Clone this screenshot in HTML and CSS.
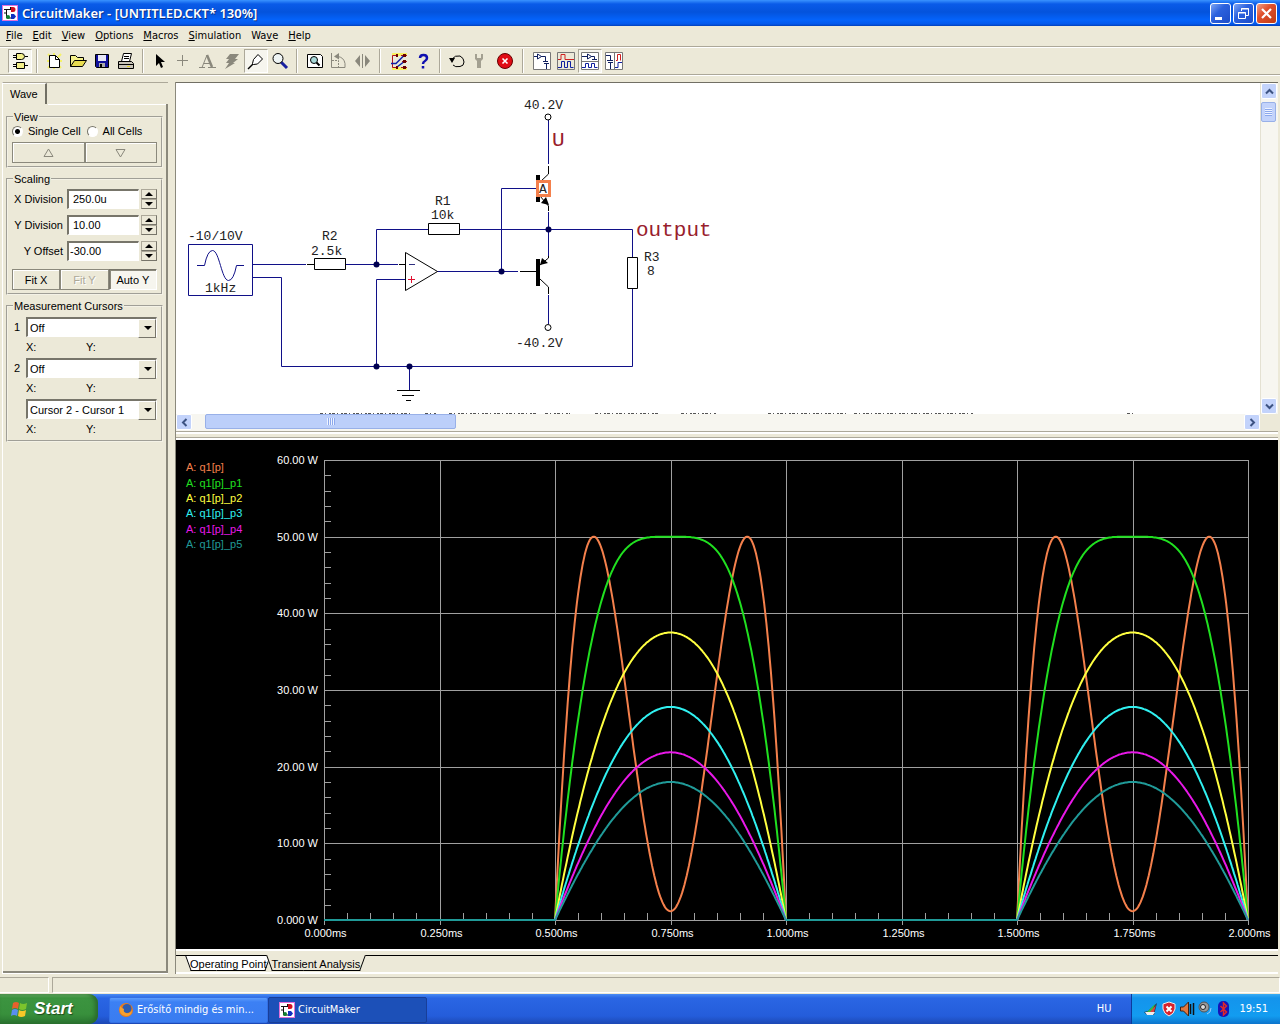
FILE: index.html
```
<!DOCTYPE html>
<html lang="en">
<head>
  <meta charset="UTF-8">
  <title>CircuitMaker - [UNTITLED.CKT* 130%]</title>
  <meta name="viewport" content="width=device-width, initial-scale=1.0">
  <link rel="stylesheet" href="styles.css">
</head>
<body>
  <!-- shared logo -->
  <svg class="defs" width="0" height="0">
    <symbol id="logo" viewBox="0 0 16 16">
      <rect width="16" height="16" fill="#fff" stroke="#e070d8" stroke-width="2"/>
      <path d="M2 4.500h9M4.500 5v8h6M8.500 2v3M2 8h2" fill="none" stroke="#111"/>
      <path d="M9 2h2a2.500 2.500 0 0 1 0 5h-2z" fill="#d01020"/>
      <circle cx="6" cy="12" r="2" fill="#108030"/>
      <path d="M9 9h3l2 2.500-2 2.500h-3z" fill="#1030c0"/>
    </symbol>
  </svg>

  <header class="titlebar">
    <svg class="app-icon" width="16" height="16"><use href="#logo"/></svg>
    <h1>CircuitMaker - [UNTITLED.CKT* 130%]</h1>
    <div class="window-buttons">
      <button class="win-btn" aria-label="Minimize"><svg width="19" height="19"><path d="M4 13h7v3H4z" fill="#fff"/></svg></button>
      <button class="win-btn" aria-label="Restore"><svg width="19" height="19" fill="none" stroke="#fff"><path d="M7.500 7V4.500h7v7H12M7 5h8" /><path d="M4.500 8.500h7v6h-7zM4 9h8"/></svg></button>
      <button class="win-btn close" aria-label="Close"><svg width="19" height="19"><path d="M5 5l9 9M14 5l-9 9" stroke="#fff" stroke-width="2.200"/></svg></button>
    </div>
  </header>

  <nav class="menubar">
    <button><u>F</u>ile</button>
    <button><u>E</u>dit</button>
    <button><u>V</u>iew</button>
    <button><u>O</u>ptions</button>
    <button><u>M</u>acros</button>
    <button><u>S</u>imulation</button>
    <button>Wa<u>v</u>e</button>
    <button><u>H</u>elp</button>
  </nav>

  <div class="toolbar">
    <button class="tool pressed" aria-label="Digital mode"><svg viewBox="0 0 20 20"><path d="M6.500 2.500h5q3 0 3 3t-3 3h-5z M6.500 11.500h8v6h-8z" fill="#f4f08a" stroke="#000"/><path d="M3 4.500h3M3 6.500h3M15 5.500h3M3 13.500h3M3 15.500h3M15 14.500h3" stroke="#000"/></svg></button>
    <span class="sep"></span>
    <button class="tool" aria-label="New"><svg viewBox="0 0 20 20"><path d="M4 3l13 14M17 3L4 17M10 2v16M3 10h15" stroke="#f5f26a" stroke-width="2"/><path d="M5.500 4.500h6l4 4v8h-10z" fill="#fff" stroke="#000"/><path d="M11.500 4.500v4h4" fill="none" stroke="#000"/></svg></button>
    <button class="tool" aria-label="Open"><svg viewBox="0 0 20 20"><path d="M2.500 15.500v-11h5l2 2h6v3" fill="#f4f08a" stroke="#000"/><path d="M2.500 15.500l4-6h12l-4 6z" fill="#e8dc50" stroke="#000"/></svg></button>
    <button class="tool" aria-label="Save"><svg viewBox="0 0 20 20"><path d="M3.500 3.500h13v13h-12l-1-1z" fill="#10109a" stroke="#000"/><path d="M6 4h8v6H6z" fill="#e8e8f8"/><path d="M7 12h6v4H7z" fill="#aaa"/><path d="M8 13h2v3H8z" fill="#000"/></svg></button>
    <button class="tool" aria-label="Print"><svg viewBox="0 0 20 20"><path d="M5.500 10.500l2-8h8l-2 8z" fill="#fff" stroke="#000"/><path d="M8 5.500h5M8 7.500h5" stroke="#000"/><path d="M2.500 10.500h13l2 2v5h-15z" fill="#c8c4b8" stroke="#000"/><path d="M3 13.500h14" stroke="#000"/><path d="M11 15.500h3" stroke="#e0d020"/></svg></button>
    <span class="sep"></span>
    <button class="tool" aria-label="Select"><svg viewBox="0 0 20 20"><path d="M6 3v12l3-3 2 5 2-1-2-5h4z"/></svg></button>
    <button class="tool" aria-label="Wire"><svg viewBox="0 0 20 20"><path d="M8.500 4v11M3 9.500h11" stroke="#8a887c"/></svg></button>
    <button class="tool" aria-label="Text"><svg viewBox="0 0 20 20"><path d="M1 16.500h6M10 16.500h8M4 16.500L9 4M6 12.500h6" stroke="#8a887c" fill="none"/><path d="M9 4l5 12" stroke="#8a887c" stroke-width="2.500"/></svg></button>
    <button class="tool" aria-label="Delete"><svg viewBox="0 0 20 20"><path d="M8 3h9l-4 5h3l-5 4h2L3 18l4-6H4l3-4H4z" fill="#8a887c"/></svg></button>
    <button class="tool pressed" aria-label="Probe"><svg viewBox="0 0 20 20"><path d="M2 18l5-5" stroke="#000" stroke-width="1.500"/><path d="M6.500 12.500l1-4L12 3.500l4.500 4.500-5 5-4 .5z" fill="#fff" stroke="#000"/></svg></button>
    <button class="tool" aria-label="Zoom"><svg viewBox="0 0 20 20"><path d="M11 11l6 6" stroke="#1820a0" stroke-width="3"/><circle cx="8" cy="7.500" r="5" fill="#eef4f4" stroke="#000"/></svg></button>
    <span class="sep"></span>
    <button class="tool" aria-label="Fit page"><svg viewBox="0 0 20 20"><path d="M3.500 3.500h13l2 2v11h-15z" fill="#fff" stroke="#000"/><circle cx="10" cy="9" r="3.500" fill="#a8d8d8" stroke="#000"/><path d="M12.500 11.500l3 3" stroke="#000" stroke-width="2"/></svg></button>
    <button class="tool" aria-label="Rotate"><svg viewBox="0 0 20 20"><path d="M3.500 2v14.500H17v-4q-1-6-7-7" fill="none" stroke="#8a887c"/><path d="M11 2L6 5.500l5 3z" fill="#8a887c"/><path d="M4 9.500h6.500v7" fill="none" stroke="#8a887c" stroke-dasharray="2 1"/></svg></button>
    <button class="tool" aria-label="Mirror"><svg viewBox="0 0 20 20"><path d="M8 4v12L3 10zM13 4v12l5-6z" fill="#8a887c"/><path d="M10.500 3v14" stroke="#8a887c"/></svg></button>
    <span class="sep wide"></span>
    <button class="tool" aria-label="Run analysis"><svg viewBox="0 0 20 20"><path d="M3 2h15v3H3zM3 16h15v3H3z" fill="#f8f060"/><path d="M8 4.500H3.500v12H8M12 4.500h6M13 10.500h5M12 16.500h6" stroke="#b01020" fill="none"/><path d="M2 12.500h5l8-8M8 16l8-6" stroke="#1020a8" stroke-width="1.500" fill="none"/><path d="M7 3h2v3H7zM14 3h3v3h-3zM14 9h3v3h-3zM7 15h2v3H7zM14 15h3v3h-3z" fill="#600"/></svg></button>
    <button class="tool" aria-label="Help"><svg viewBox="0 0 20 20"><path d="M7 7q0-3 3.500-3t3.500 3q0 2-2 3t-2 3M10 15v2.500" stroke="#1010b0" stroke-width="2.500" fill="none"/></svg></button>
    <span class="sep"></span>
    <button class="tool" aria-label="Reset"><svg viewBox="0 0 20 20"><path d="M5 8q3-4 8-3 4 2 4 6t-4 4.500q-5 1-7-1.500" fill="none" stroke="#000"/><path d="M2 7l6 0-3 5z"/></svg></button>
    <button class="tool" aria-label="Step"><svg viewBox="0 0 20 20"><path d="M4 3v5l2 2v7h4v-7l2-2V3l-2 0v4H6V3z" fill="#a3a091"/></svg></button>
    <button class="tool" aria-label="Stop"><svg viewBox="0 0 20 20"><circle cx="10" cy="10" r="7.500" fill="#e00c14" stroke="#600"/><path d="M7.500 7.500l5 5M12.500 7.500l-5 5" stroke="#fff" stroke-width="1.600"/></svg></button>
    <span class="sep wide"></span>
    <button class="tool" aria-label="Schematic view"><svg viewBox="0 0 20 20"><path d="M1.500 1.500h17v17h-17z" fill="#fff" stroke="#777"/><path d="M2 5.500h3M5.500 3v5l4-2.500zM9 5.500h4.500v5M11 10.500h5M12 12.500h5M14.500 13v5" fill="none" stroke="#102060"/></svg></button>
    <button class="tool" aria-label="Waveform view"><svg viewBox="0 0 20 20"><path d="M1.500 1.500h17v17h-17z" fill="#ece9d8" stroke="#777"/><path d="M2 8.500h3v-5h4v5h9" fill="none" stroke="#d02020"/><path d="M2 16.500h3.500v-6h3v6h3v-6h3v6h3" fill="none" stroke="#1020a0"/></svg></button>
    <button class="tool pressed" aria-label="Split horizontal"><svg viewBox="0 0 20 20"><path d="M1.500 1.500h17v17h-17zM2 10.500h16" fill="#fff" stroke="#777"/><path d="M2 5.500h5M7.500 3v5l4-2.500zM11 5.500h3.500v3M12 8.500h5" fill="none" stroke="#102060"/><path d="M2 16.500h3.500v-4h3v4h3v-4h3v4h3" fill="none" stroke="#1020a0"/></svg></button>
    <button class="tool" aria-label="Split vertical"><svg viewBox="0 0 20 20"><path d="M1.500 1.500h17v17h-17zM10.500 2v16" fill="#fff" stroke="#777"/><path d="M2 4.500h4.500v5M3 9.500h6M4 11.500h5M6.500 12v6" fill="none" stroke="#102060"/><path d="M12 9.500h1.500v-6h3v6" fill="none" stroke="#d02020"/><path d="M11 16.500h3v-5h4" fill="none" stroke="#1020a0"/></svg></button>
  </div>

  <main class="workspace">
    <aside class="sidebar">
      <button class="side-tab">Wave</button>
      <div class="side-panel">
        <fieldset>
          <legend>View</legend>
          <div class="radio-row">
            <label><input type="radio" name="cells" checked>Single Cell</label>
            <label><input type="radio" name="cells">All Cells</label>
          </div>
          <div class="button-row">
            <button class="btn" aria-label="Previous"><svg width="11" height="10"><path d="M5.500 1L10 8.500H1z" fill="none" stroke="#8a887c"/></svg></button>
            <button class="btn" aria-label="Next"><svg width="11" height="10"><path d="M5.500 9L10 1.500H1z" fill="none" stroke="#8a887c"/></svg></button>
          </div>
        </fieldset>

        <fieldset>
          <legend>Scaling</legend>
          <div class="scale-row">
            <label for="xdiv">X Division</label>
            <input type="text" id="xdiv" value="250.0u">
            <div class="spin"><button aria-label="Up"></button><button aria-label="Down"></button></div>
          </div>
          <div class="scale-row">
            <label for="ydiv">Y Division</label>
            <input type="text" id="ydiv" value="10.00">
            <div class="spin"><button aria-label="Up"></button><button aria-label="Down"></button></div>
          </div>
          <div class="scale-row">
            <label for="yoff">Y Offset</label>
            <input type="text" id="yoff" class="offset" value="-30.00">
            <div class="spin"><button aria-label="Up"></button><button aria-label="Down"></button></div>
          </div>
          <div class="button-row fit">
            <button class="btn">Fit X</button>
            <button class="btn" disabled>Fit Y</button>
            <button class="btn down">Auto Y</button>
          </div>
        </fieldset>

        <fieldset class="cursors">
          <legend>Measurement Cursors</legend>
          <div class="cursor-row">
            <label for="cur1">1</label>
            <span class="combo"><select id="cur1"><option>Off</option></select></span>
          </div>
          <div class="xy"><span>X:</span><span>Y:</span></div>
          <div class="cursor-row">
            <label for="cur2">2</label>
            <span class="combo"><select id="cur2"><option>Off</option></select></span>
          </div>
          <div class="xy"><span>X:</span><span>Y:</span></div>
          <div class="cursor-row">
            <label for="cur3"></label>
            <span class="combo"><select id="cur3" aria-label="Difference"><option>Cursor 2 - Cursor 1</option></select></span>
          </div>
          <div class="xy"><span>X:</span><span>Y:</span></div>
        </fieldset>
      </div>
    </aside>

    <section class="content">
      <div class="schematic">
        <div class="canvas">
          <svg width="1000" height="331" viewBox="176 83 1000 331">
            <!-- wires -->
            <g class="wire">
              <path d="M252.500 264.500H306M252.500 277.500H281.500V366.500H632.500V289M345 264.500H398M376.500 264.500V229.500H428M460 229.500H632.500V257M376.500 366.500V279.500H405M437 271.500H518M501.500 271.500V188.500H537M548.500 120V164M548.500 212V256M548.500 295V324M409.500 366.500V390"/>
              <path d="M188.500 244.500h64v51h-64z"/>
              <path d="M197 265.500h7.500q3-15 8-15c7 0 9 30 16 30q5 0 8-15h7.500"/>
            </g>
            <!-- parts -->
            <g class="part">
              <path d="M307 264.500H314M399 264.500H405M520 271.500H537M548.500 166V174L540 182M540 196L548.500 206V211M548.500 256V258L540 265M540 279L548.500 287V294"/>
              <path d="M314.500 258.500h31v11h-31zM428.500 223.500h31v11h-31zM627.500 257.500h10v31h-10z" fill="#fff"/>
              <path d="M405.500 252.500v38l32-19z" fill="#fff"/>
              <path d="M397 390.500h23M402 395.500h12M406 400.500h5"/>
              <circle cx="548" cy="117" r="3" fill="#fff"/>
              <circle cx="548" cy="327.500" r="3" fill="#fff"/>
            </g>
            <path d="M536 175h4v27h-4zM536 259h4v27h-4z"/>
            <path d="M549 205l-8-2 5-6zM540 265l2-7 6 5z"/>
            <g class="node">
              <circle cx="376.500" cy="264.500" r="3"/><circle cx="376.500" cy="366.500" r="3"/><circle cx="409.500" cy="366.500" r="3"/>
              <circle cx="501.500" cy="271.500" r="3"/><circle cx="548.500" cy="229.500" r="3"/>
            </g>
            <path d="M409 264.500h6" stroke="#303080"/>
            <path d="M408 279.500h7M411.500 276v7" stroke="#e01030"/>
            <rect x="537.500" y="181.500" width="12" height="14" fill="#fff" stroke="#f4804c" stroke-width="3"/>
            <g class="sch-text">
              <text x="524" y="109">40.2V</text>
              <text x="516" y="347">-40.2V</text>
              <text x="188" y="240">-10/10V</text>
              <text x="205" y="292">1kHz</text>
              <text x="322" y="240">R2</text>
              <text x="311" y="255">2.5k</text>
              <text x="435" y="205">R1</text>
              <text x="431" y="219">10k</text>
              <text x="644" y="261">R3</text>
              <text x="647" y="275">8</text>
              <text x="539" y="193">A</text>
            </g>
            <g class="net">
              <text x="552" y="146">U</text>
              <text x="636" y="236">output</text>
            </g>
            <!-- line of text scrolled below the edge -->
            <path d="M320 413.500H410M425 413.500H436M449 413.500H536M545 413.500H570M595 413.500H658M681 413.500H716M768 413.500H846M854 413.500H974M1127 413.500H1135" class="cutoff"/>
          </svg>
        </div>
        <div class="vscroll">
          <button class="sb" aria-label="Scroll up"><svg width="9" height="9"><path d="M1 6.500l3.500-3.500L8 6.500" /></svg></button>
          <span class="thumb"></span>
          <button class="sb" aria-label="Scroll down"><svg width="9" height="9"><path d="M1 2.500l3.500 3.500L8 2.500"/></svg></button>
        </div>
        <div class="hscroll">
          <button class="sb" aria-label="Scroll left"><svg width="9" height="9"><path d="M6.500 1L3 4.500 6.500 8"/></svg></button>
          <span class="thumb"></span>
          <button class="sb" aria-label="Scroll right"><svg width="9" height="9"><path d="M2.500 1L6 4.500 2.500 8"/></svg></button>
        </div>
      </div>
      <div class="splitter"></div>
      <div class="graph">
        <svg id="plot" viewBox="0 0 1102 509"></svg>
      </div>
      <div class="sheet-tabs">
        <button class="sheet">Operating Point</button>
        <button class="sheet active">Transient Analysis</button>
      </div>
    </section>
  </main>

  <div class="statusbar"><span class="cell"></span><span class="cell fill"></span></div>

  <footer class="taskbar">
    <button class="start">
      <svg width="20" height="18"><path d="M3 3q3-2 6 0l-1 6q-3-2-6 0z" fill="#e8602c"/><path d="M10 3q3 2 7 0l-1 6q-4 2-7 0z" fill="#7cc42c"/><path d="M2 10q3-2 6 0l-1 6q-3-2-6 0z" fill="#5a8ef0"/><path d="M9 10q3 2 7 0l-1 6q-4 2-7 0z" fill="#f8c828"/></svg>
      Start
    </button>
    <button class="task">
      <svg width="16" height="16"><circle cx="8" cy="8" r="7" fill="#e87a1c"/><circle cx="9" cy="6.500" r="4.500" fill="#2c5cb0"/><path d="M2 4q-2 9 6 10 6 0 6-6-2 4-6 3-3-1-2-4l-2-1z" fill="#f6a030"/></svg>
      Erősítő mindig és min...
    </button>
    <button class="task current">
      <svg width="16" height="16"><use href="#logo"/></svg>
      CircuitMaker
    </button>
    <span class="lang">HU</span>
    <div class="tray">
      <svg width="16" height="16"><path d="M1 11l4-1 9-8-2 8-1 4H4z" fill="#183c50"/><path d="M4 11l8-8-3 8z" fill="#30c040"/><path d="M7 11l6-7-2 7z" fill="#e04040"/><path d="M2 11h10l-2 3H4z" fill="#eee"/></svg>
      <svg width="16" height="16"><path d="M8 1l6 2v5q-1 5-6 7-5-2-6-7V3z" fill="#d8222c" stroke="#eee"/><path d="M5.500 5.500l5 5M10.500 5.500l-5 5" stroke="#fff" stroke-width="2"/></svg>
      <svg width="16" height="16"><path d="M1.500 6h3l5-5v14l-5-5h-3z" fill="#e07840" stroke="#402010"/><path d="M11.500 3v10M14.500 2v12" stroke="#111" stroke-width="1.500"/></svg>
      <svg width="16" height="16"><circle cx="7" cy="6" r="5" fill="#999" stroke="#555"/><circle cx="6" cy="6" r="2.500" fill="#ddd" stroke="#222"/><path d="M10 13q4-1 4-6" fill="none" stroke="#9cf"/></svg>
      <svg width="16" height="16"><rect x="3" y="0" width="11" height="16" rx="5" fill="#1414b8"/><path d="M5.500 5l6 6-3 3V2l3 3-6 6" fill="none" stroke="#e02828" stroke-width="1.500"/></svg>
      <time>19:51</time>
    </div>
  </footer>

  <script src="plot.js"></script>
</body>
</html>
```
FILE: styles.css
```
* {
  box-sizing: border-box;
}
body {
  margin: 0;
  min-height: 100vh;
  display: flex;
  flex-direction: column;
  background: #ece9d8;
  color: #000;
  font-family: "Liberation Sans", Arial, sans-serif;
  font-size: 11px;
  line-height: 14px;
}
button,
input,
select {
  font: inherit;
  color: inherit;
  margin: 0;
}
svg {
  display: block;
  flex: none;
}
.defs {
  position: absolute;
}

/* title bar */
.titlebar {
  display: flex;
  align-items: center;
  gap: 4px;
  height: 26px;
  padding: 0 3px 0 2px;
  background: linear-gradient(#3a93ff, #0a5be8 4px, #0453dc 12px, #0463fb 20px, #0459ec 24px, #0340b8);
}
.titlebar h1 {
  margin: 0;
  flex: 1;
  color: #fff;
  font-family: "Noto Sans", sans-serif;
  font-size: 13px;
  font-weight: 600;
  text-shadow: 1px 1px #0a2f86;
}
.window-buttons {
  display: flex;
  gap: 2px;
}
.win-btn {
  width: 21px;
  height: 21px;
  padding: 0;
  border: 1px solid #fff;
  border-radius: 3px;
  background: linear-gradient(135deg, #7ea6f4, #2c62de 40%, #1c4cc8);
}
.win-btn.close {
  background: linear-gradient(135deg, #f0a088, #e0502c 40%, #c03c14);
}

/* menu and tools */
.menubar {
  display: flex;
  gap: 10px;
  height: 21px;
  padding: 0 6px;
  border-bottom: 1px solid #aca899;
}
.menubar button {
  padding: 0;
  border: none;
  background: none;
  font-family: "DejaVu Sans Condensed", sans-serif;
  font-size: 11px;
}
.toolbar {
  display: flex;
  align-items: center;
  height: 28px;
  padding: 0 8px;
  border-top: 1px solid #fff;
  border-bottom: 1px solid #aca899;
  box-shadow: 0 1px #fff;
}
.tool {
  display: flex;
  align-items: center;
  justify-content: center;
  width: 24px;
  height: 24px;
  padding: 0;
  border: 1px solid transparent;
  background: none;
}
.tool svg {
  width: 20px;
  height: 20px;
}
.tool.pressed {
  border-color: #aca899 #fff #fff #aca899;
  background: #f6f5ee;
}
.sep {
  width: 2px;
  height: 24px;
  margin: 0 4px;
  border-left: 1px solid #aca899;
  border-right: 1px solid #fff;
}
.sep.wide {
  margin: 0 6px 0 5px;
}

/* workspace */
.workspace {
  flex: 1;
  display: flex;
  gap: 7px;
  padding: 7px 2px 0 2px;
  min-height: 0;
}
.sidebar {
  flex: none;
  width: 166px;
  display: flex;
  flex-direction: column;
  align-items: flex-start;
  border-left: 1px solid #fff;
  border-top: 1px solid #aca899;
  border-bottom: 1px solid #fff;
}
.side-tab {
  height: 21px;
  padding: 0 7px;
  border: 1px solid #fff;
  border-width: 1px 0 0 0;
  border-right: 2px solid #716f64;
  background: none;
}
.side-panel {
  flex: 1;
  width: 100%;
  padding: 6px 3px 5px;
  border-right: 2px solid #8b897c;
  border-bottom: 2px solid #8b897c;
  background: linear-gradient(#fff, #fff) 45px 0 / 100% 1px no-repeat;
}
fieldset {
  margin: 0 0 4px;
  padding: 0 4px 3px;
  min-width: 0;
  border: 2px groove #f4f2e6;
}
legend {
  margin-left: 1px;
  padding: 0 1px;
  height: 14px;
}
.radio-row {
  display: flex;
  gap: 6px;
}
.radio-row label {
  display: flex;
  align-items: center;
  gap: 5px;
  white-space: nowrap;
}
.radio-row input {
  appearance: none;
  width: 11px;
  height: 11px;
  border: 1px solid #fff;
  border-color: #77756a #fff #fff #77756a;
  border-radius: 50%;
  background: #fff;
}
.radio-row input:checked {
  background: radial-gradient(circle, #000 2px, #fff 3px);
}
.button-row {
  display: flex;
  margin-top: 4px;
}
.btn {
  flex: 1;
  height: 21px;
  padding: 0;
  display: flex;
  align-items: center;
  justify-content: center;
  border: 1px solid;
  border-color: #fff #77756a #77756a #fff;
  box-shadow: inset 1px 1px #fff;
  outline: 1px solid #8b897c;
  outline-offset: -1px;
  background: #ece9d8;
}
.btn:disabled {
  color: #aca899;
  text-shadow: 1px 1px #fff;
}
.btn.down {
  border-color: #77756a #fff #fff #77756a;
  outline: none;
  box-shadow: inset 1px 1px #8b897c;
  background: #f6f5ee;
}
.button-row.fit {
  margin-top: 8px;
}
.scale-row {
  display: flex;
  align-items: center;
  height: 21px;
  margin-top: 5px;
}
legend + .scale-row {
  margin-top: 2px;
}
.scale-row label {
  width: 51px;
  text-align: right;
}
.scale-row input {
  flex: 1;
  min-width: 0;
  height: 20px;
  margin: 0 2px 0 4px;
  padding: 0 4px;
  border: 1px solid;
  border-width: 2px 1px 1px 2px;
  border-color: #77756a #fff #fff #77756a;
  background: #fff;
}
.scale-row .offset {
  padding-left: 1px;
}
.spin {
  width: 16px;
  display: flex;
  flex-direction: column;
}
.spin button {
  display: flex;
  align-items: center;
  justify-content: center;
  height: 10px;
  padding: 0;
  border: 1px solid;
  border-color: #aca899 #77756a #77756a #aca899;
  background: #ece9d8;
}
.spin button::before {
  content: "";
  border: 4px solid transparent;
  border-top-width: 0;
  border-bottom: 4px solid #000;
}
.spin button:last-child::before {
  border-bottom-width: 0;
  border-top: 4px solid #000;
}
.cursors {
  padding-bottom: 4px;
}
.cursor-row {
  display: flex;
  align-items: center;
  margin-top: 4px;
}
.cursor-row label {
  width: 14px;
  padding-left: 2px;
}
.combo {
  position: relative;
  flex: 1;
  height: 20px;
}
.combo select {
  appearance: none;
  width: 100%;
  height: 20px;
  padding: 0 2px;
  border: 1px solid;
  border-width: 2px 1px 1px 2px;
  border-color: #77756a #fff #fff #77756a;
  border-radius: 0;
  background: #fff;
}
.combo::before {
  content: "";
  position: absolute;
  top: 2px;
  right: 1px;
  width: 16px;
  height: 17px;
  border: 1px solid;
  border-color: #fff #77756a #77756a #fff;
  background: #ece9d8;
  pointer-events: none;
}
.combo::after {
  content: "";
  position: absolute;
  top: 9px;
  right: 5px;
  border: 4px solid transparent;
  border-top-color: #000;
  border-bottom-width: 0;
  pointer-events: none;
}
.xy {
  display: flex;
  margin-top: 3px;
  padding-left: 14px;
}
.xy span {
  width: 60px;
}

/* schematic */
.content {
  flex: 1;
  min-width: 0;
  display: flex;
  flex-direction: column;
  border-left: 1px solid #8b897c;
}
.schematic {
  display: grid;
  grid-template-columns: 1fr 18px;
  grid-template-rows: auto 17px;
  border-top: 1px solid #716f64;
}
.canvas {
  overflow: hidden;
  background: #fff;
}
.wire {
  fill: none;
  stroke: #101088;
}
.part {
  fill: none;
  stroke: #000;
}
.node {
  fill: #000050;
}
.sch-text,
.net {
  font-family: "Liberation Mono", "Courier New", monospace;
  font-size: 13px;
  fill: #222;
}
.net {
  font-size: 21px;
  fill: #98202c;
}
.cutoff {
  fill: none;
  stroke: #555;
  stroke-dasharray: 3 2 1 3 2 1;
}
.vscroll,
.hscroll {
  display: flex;
  background: #f7f6f0;
}
.vscroll {
  flex-direction: column;
  border-left: 1px solid #e4e1d2;
}
.sb {
  flex: none;
  display: flex;
  align-items: center;
  justify-content: center;
  width: 16px;
  height: 16px;
  padding: 0;
  border: 1px solid #fff;
  border-radius: 2px;
  background: #c3d3fb;
}
.sb svg {
  fill: none;
  stroke: #3d5382;
  stroke-width: 2;
}
.sb:last-child {
  margin-left: auto;
}
.vscroll .sb:last-child {
  margin: auto 0 0;
}
.thumb {
  border: 1px solid #98b0e8;
  border-radius: 2px;
}
.vscroll .thumb {
  width: 15px;
  height: 20px;
  margin-top: 3px;
  background: repeating-linear-gradient(#eef3ff 0 1px, #8ca8ec 1px 2px) center / 7px 8px no-repeat, #c3d3fb;
}
.hscroll .thumb {
  width: 251px;
  height: 15px;
  margin-left: 13px;
  background: repeating-linear-gradient(90deg, #eef3ff 0 1px, #8ca8ec 1px 2px) center / 8px 7px no-repeat, #bccffa;
}
.splitter {
  height: 9px;
  border-top: 1px solid #aca899;
  border-bottom: 2px solid #fff;
  background: linear-gradient(#fff 2px, #ece9d8 2px 5px, #aca899 5px);
}

/* graph */
.graph {
  flex: 1;
  min-height: 0;
  background: #000;
}
.graph svg {
  width: 100%;
  height: 100%;
}
.graph text {
  fill: #fff;
}
.grid {
  fill: none;
  stroke: #a0a0a0;
}
.curve {
  fill: none;
  stroke-width: 2;
}
.sheet-tabs {
  display: flex;
  height: 25px;
  padding: 0 0 0 12px;
  border-top: 2px solid #fff;
  border-bottom: 2px solid #fff;
  background: linear-gradient(#ece9d8 4px, #000 4px 5px, #ece9d8 5px);
}
.sheet {
  position: relative;
  z-index: 1;
  height: 15px;
  margin: 5px 1px 0 0;
  padding: 0 2px;
  border: none;
  background: none;
}
.sheet::before,
.sheet::after {
  content: "";
  position: absolute;
  z-index: -1;
  top: 0;
  bottom: 0;
  width: 60%;
  background: #fff;
  border-bottom: 1px solid #000;
}
.sheet::before {
  left: 0;
  border-left: 1px solid #000;
  transform: skewX(20deg);
}
.sheet::after {
  right: 0;
  border-right: 1px solid #000;
  transform: skewX(-20deg);
}
.sheet.active::before,
.sheet.active::after {
  top: -1px;
  background: #ece9d8;
}

/* status bar and task bar */
.statusbar {
  display: flex;
  gap: 3px;
  height: 20px;
  padding: 3px 0 1px;
}
.cell {
  width: 49px;
  border-top: 1px solid #aca899;
  border-right: 1px solid #fff;
  border-bottom: 1px solid #fff;
}
.cell.fill {
  flex: 1;
  border-left: 1px solid #aca899;
}
.taskbar {
  display: flex;
  align-items: stretch;
  height: 30px;
  background: linear-gradient(#4a8cf4, #2a66e4 4px, #245ddb 22px, #1c48b4);
  color: #fff;
  font-family: "DejaVu Sans Condensed", sans-serif;
  font-size: 11px;
}
.start {
  display: flex;
  align-items: center;
  gap: 4px;
  width: 98px;
  margin-right: 11px;
  padding: 0 0 0 10px;
  border: none;
  border-radius: 0 9px 9px 0;
  background: linear-gradient(#6cb46a, #3c9440 4px, #38903c 20px, #2a7430);
  box-shadow: inset -3px 0 4px #2a6a2c;
  font-family: "Liberation Sans", sans-serif;
  font-size: 17px;
  font-weight: bold;
  font-style: italic;
  text-shadow: 1px 1px 1px #1c4a1c;
}
.task {
  display: flex;
  align-items: center;
  gap: 3px;
  width: 159px;
  height: 26px;
  margin: 3px 0 1px;
  padding: 0 8px;
  border: 1px solid #3470e4;
  border-radius: 2px;
  background: linear-gradient(#5c9cfc, #3c80f4 4px, #3a7cf0);
  white-space: nowrap;
}
.task.current {
  padding-left: 10px;
  border-color: #183e98;
  background: #1c50b8;
}
.lang {
  margin-left: auto;
  padding: 8px 20px 0 0;
}
.tray {
  display: flex;
  align-items: center;
  gap: 2px;
  padding: 0 12px 0 11px;
  border-left: 1px solid #0c3c9c;
  background: linear-gradient(#38acf4, #1494ec 4px, #129cf0 22px, #0c74cc);
}
.tray time {
  margin-left: 6px;
}
```
FILE: plot.js
```
const LEFT = 148, TOP = 20, WIDTH = 924, HEIGHT = 460;
const SUPPLY = 40, LOAD = 8;
const traces = [
  { name: 'A: q1[p]', color: '#f4804c', amp: 39.77, y: 31 },
  { name: 'A: q1[p]_p1', color: '#20e020', amp: 20, y: 47 },
  { name: 'A: q1[p]_p2', color: '#ffff40', amp: 10, y: 62 },
  { name: 'A: q1[p]_p3', color: '#30f0f0', amp: 6.67, y: 77 },
  { name: 'A: q1[p]_p4', color: '#e818e8', amp: 5, y: 93 },
  { name: 'A: q1[p]_p5', color: '#209a98', amp: 4, y: 108 }
];
const plot = document.getElementById('plot');

function add(tag, attrs, text) {
  const el = document.createElementNS('http://www.w3.org/2000/svg', tag);
  for (const key in attrs) el.setAttribute(key, attrs[key]);
  if (text) el.textContent = text;
  plot.appendChild(el);
}

// grid, ticks and axis labels
let d = '';
for (let i = 0; i <= 8; i++) {
  const x = Math.round(LEFT + WIDTH * i / 8) + 0.5;
  d += `M${x} ${TOP}V${TOP + HEIGHT + 5}`;
  add('text', { x: x + 1, y: 497, 'text-anchor': 'middle' }, (i * 0.25).toFixed(3) + 'ms');
}
for (let i = 0; i <= 6; i++) {
  const y = Math.round(TOP + HEIGHT * i / 6);
  d += `M${LEFT} ${y + 0.5}H${LEFT + WIDTH}`;
  add('text', { x: 142, y: y + 4, 'text-anchor': 'end' }, i === 6 ? '0.000 W' : (60 - i * 10).toFixed(2) + ' W');
}
for (let i = 1; i < 30; i++) {
  d += `M${LEFT} ${Math.round(TOP + HEIGHT * i / 30) + 0.5}h7`;
}
for (let i = 1; i < 40; i++) {
  d += `M${Math.round(LEFT + WIDTH * i / 40) + 0.5} ${TOP + HEIGHT}v-7`;
}
add('path', { d: d, class: 'grid' });

// the transistor only conducts in the second half of each period
traces.forEach(function(t) {
  const points = [];
  for (let i = 0; i <= 800; i++) {
    const v = Math.max(0, -t.amp * Math.sin(2 * Math.PI * i / 400));
    const p = v * (SUPPLY - v) / LOAD;
    points.push((LEFT + WIDTH * i / 800).toFixed(1) + ',' + (TOP + HEIGHT * (1 - p / 60)).toFixed(1));
  }
  add('polyline', { points: points.join(' '), class: 'curve', stroke: t.color });
  add('text', { x: 10, y: t.y, style: 'fill:' + t.color }, t.name);
});
```
